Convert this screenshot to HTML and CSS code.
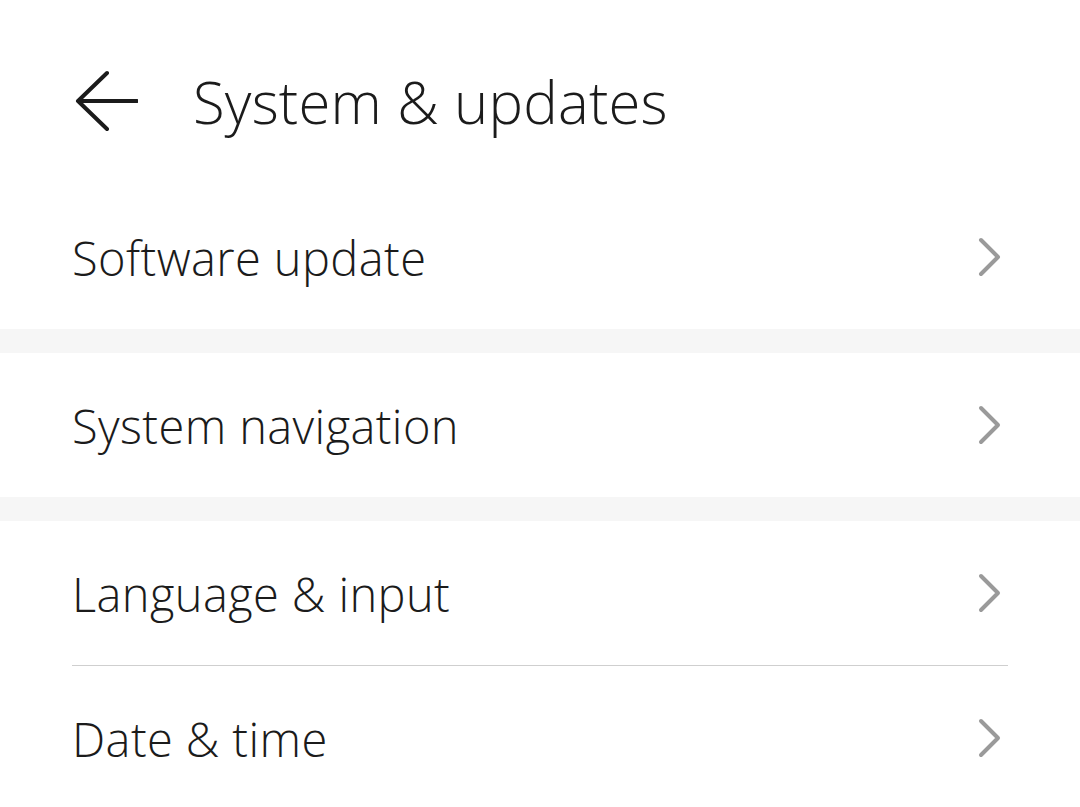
FILE: index.html
```html
<!DOCTYPE html>
<html lang="en">
<head>
    <meta charset="UTF-8">
    <meta name="viewport" content="width=device-width, initial-scale=1.0">
    <title>System &amp; updates</title>
    <link rel="stylesheet" href="styles.css">
</head>
<body>

    <header class="top-bar">
        <button class="back-btn" aria-label="Back">
            <svg width="64" height="64" viewBox="0 0 64 64">
                <path d="M33 4 L4 32 L33 60 M4 32 H63" fill="none" stroke="#1b1b1b" stroke-width="4" stroke-linecap="round" stroke-linejoin="round"/>
            </svg>
        </button>
        <h1 class="title">System &amp; updates</h1>
    </header>

    <section class="group">
        <div class="row">
            <span class="label">Software update</span>
            <svg class="chevron" width="26" height="40" viewBox="0 0 26 40">
                <path d="M4 3 L21 20 L4 37" fill="none" stroke="#9a9a9a" stroke-width="4" stroke-linecap="round" stroke-linejoin="round"/>
            </svg>
        </div>
    </section>

    <div class="gap"></div>

    <section class="group">
        <div class="row">
            <span class="label">System navigation</span>
            <svg class="chevron" width="26" height="40" viewBox="0 0 26 40">
                <path d="M4 3 L21 20 L4 37" fill="none" stroke="#9a9a9a" stroke-width="4" stroke-linecap="round" stroke-linejoin="round"/>
            </svg>
        </div>
    </section>

    <div class="gap"></div>

    <section class="group">
        <div class="row">
            <span class="label">Language &amp; input</span>
            <svg class="chevron" width="26" height="40" viewBox="0 0 26 40">
                <path d="M4 3 L21 20 L4 37" fill="none" stroke="#9a9a9a" stroke-width="4" stroke-linecap="round" stroke-linejoin="round"/>
            </svg>
        </div>
        <div class="divider"></div>
        <div class="row">
            <span class="label">Date &amp; time</span>
            <svg class="chevron" width="26" height="40" viewBox="0 0 26 40">
                <path d="M4 3 L21 20 L4 37" fill="none" stroke="#9a9a9a" stroke-width="4" stroke-linecap="round" stroke-linejoin="round"/>
            </svg>
        </div>
    </section>

</body>
</html>
```

FILE: styles.css
```css
body {
    font-family: "Open Sans", "Noto Sans", sans-serif;
    font-weight: 300;
    background-color: #ffffff;
    color: #1b1b1b;
    margin: 0;
    overflow: hidden;
}

.top-bar {
    height: 185px;
    display: flex;
    align-items: center;
    padding: 0 0 0 74px;
    box-sizing: border-box;
}

.back-btn {
    border: none;
    background: none;
    padding: 0;
    margin: 16px 0 0 0;
    width: 64px;
    height: 64px;
    display: flex;
}

.title {
    font-size: 58px;
    font-weight: 300;
    margin: 18px 0 0 55px;
    letter-spacing: 0.2px;
}

.group {
    padding: 0 72px;
}

.row {
    height: 144px;
    display: flex;
    align-items: center;
    justify-content: space-between;
}

.label {
    font-size: 47px;
    letter-spacing: 0.4px;
    margin-top: 2px;
}

.chevron {
    margin-right: 5px;
}

.gap {
    height: 24px;
    background: #f6f6f6;
}

.divider {
    height: 1px;
    background: #cfcfcf;
}
```
